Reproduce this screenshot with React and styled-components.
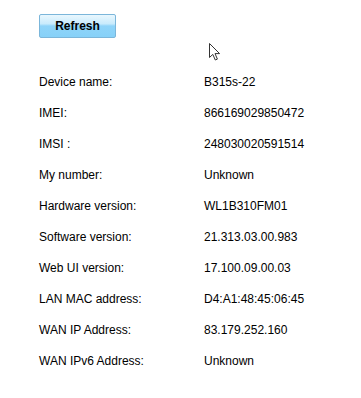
import { Fragment } from 'react';
import styled, { createGlobalStyle } from 'styled-components';

const GlobalStyle = createGlobalStyle`
	html, body {
		margin: 0;
		padding: 0;
		background: #fff;
	}
	body {
		font-family: "Liberation Sans", Arial, sans-serif;
		font-size: 12px;
		color: #000;
	}
`;

// Whole page area.
const Page = styled.div`
	position: relative;
	width: 361px;
	height: 398px;
	padding: 14px 0 0 39px;
	box-sizing: border-box;
`;

// Light blue gradient button at the top.
const Button = styled.button`
	display: block;
	width: 77px;
	height: 24px;
	padding: 0;
	border: 1px solid #7bb6da;
	border-radius: 2px;
	background: linear-gradient(to bottom, #e9f7fe 0%, #c9ebfc 40%, #8fd4f9 50%, #87d1f8 100%);
	font-family: "Liberation Sans", Arial, sans-serif;
	font-size: 12px;
	font-weight: bold;
	color: #000;
	cursor: pointer;
`;

// Info table with a label and value column.
const List = styled.div`
	display: grid;
	grid-template-columns: 165px 1fr;
	grid-auto-rows: 31.1px;
	align-items: center;
	margin-top: 28px;
`;

const Label = styled.span`
	line-height: 14px;
`;

const Value = styled.span`
	line-height: 14px;
`;

// Mouse pointer sitting over the page.
const Pointer = styled.svg`
	position: absolute;
	left: 208px;
	top: 42px;
`;

const rows = [
	['Device name:', 'B315s-22'],
	['IMEI:', '866169029850472'],
	['IMSI :', '248030020591514'],
	['My number:', 'Unknown'],
	['Hardware version:', 'WL1B310FM01'],
	['Software version:', '21.313.03.00.983'],
	['Web UI version:', '17.100.09.00.03'],
	['LAN MAC address:', 'D4:A1:48:45:06:45'],
	['WAN IP Address:', '83.179.252.160'],
	['WAN IPv6 Address:', 'Unknown'],
];

export default function App() {
	return (
		<>
			<GlobalStyle />
			<Page>
				<Button>Refresh</Button>
				<List>
					{rows.map(([label, value]) => (
						<Fragment key={label}>
							<Label>{label}</Label>
							<Value>{value}</Value>
						</Fragment>
					))}
				</List>
				<Pointer width="14" height="20" viewBox="0 0 14 20">
					<path
						d="M1.5 1.5 L1.5 15.5 L4.8 12.4 L7.3 18 L9.4 17.1 L7 11.6 L11.6 11.6 Z"
						fill="#fff"
						stroke="#333"
						strokeWidth="1"
						strokeLinejoin="miter"
					/>
				</Pointer>
			</Page>
		</>
	);
}
